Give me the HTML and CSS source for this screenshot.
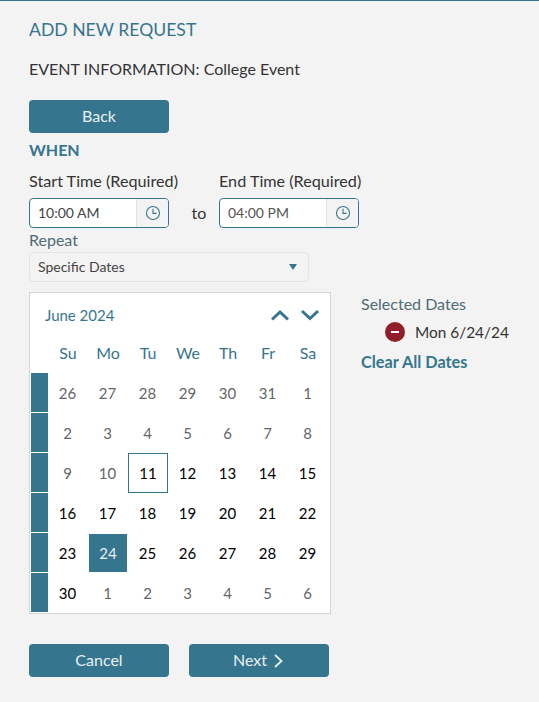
FILE: index.html
```html
<!DOCTYPE html>
<html lang="en">
<head>
    <meta charset="UTF-8">
    <meta name="viewport" content="width=device-width, initial-scale=1.0">
    <title>Add New Request</title>
    <link rel="stylesheet" href="styles.css">
</head>
<body>
    <div class="page">
        <h1 class="page-title">ADD NEW REQUEST</h1>
        <p class="event-info">EVENT INFORMATION: College Event</p>

        <button class="btn back-btn">Back</button>
        <h2 class="section-title">WHEN</h2>

        <div class="time-row">
            <div class="time-field">
                <label class="time-label">Start Time (Required)</label>
                <div class="time-input">
                    <span class="time-value start-value">10:00 AM</span>
                    <span class="time-icon">
                        <svg width="16" height="16" viewBox="0 0 16 16" fill="none" stroke="#36758e" stroke-width="1.1"><circle cx="8" cy="8" r="6.5"/><path d="M8 3.8V8.4H11.6"/></svg>
                    </span>
                </div>
            </div>
            <span class="time-to">to</span>
            <div class="time-field">
                <label class="time-label">End Time (Required)</label>
                <div class="time-input">
                    <span class="time-value">04:00 PM</span>
                    <span class="time-icon">
                        <svg width="16" height="16" viewBox="0 0 16 16" fill="none" stroke="#36758e" stroke-width="1.1"><circle cx="8" cy="8" r="6.5"/><path d="M8 3.8V8.4H11.6"/></svg>
                    </span>
                </div>
            </div>
        </div>

        <label class="repeat-label">Repeat</label>
        <div class="repeat-select">
            <span class="repeat-value">Specific Dates</span>
            <span class="select-arrow"></span>
        </div>

        <div class="date-row">
            <div class="calendar">
                <div class="cal-header">
                    <span class="cal-month">June 2024</span>
                    <span class="cal-nav">
                        <svg width="20" height="12" viewBox="0 0 20 12" fill="none" stroke="#36758e" stroke-width="3"><path d="M2 10.5L10 3L18 10.5"/></svg>
                        <svg width="20" height="12" viewBox="0 0 20 12" fill="none" stroke="#36758e" stroke-width="3"><path d="M2 2L10 9.5L18 2"/></svg>
                    </span>
                </div>
                <div class="cal-grid">
                    <span></span>
                    <span class="dow">Su</span><span class="dow">Mo</span><span class="dow">Tu</span><span class="dow">We</span><span class="dow">Th</span><span class="dow">Fr</span><span class="dow">Sa</span>

                    <span class="week"></span>
                    <span class="day other">26</span><span class="day other">27</span><span class="day other">28</span><span class="day other">29</span><span class="day other">30</span><span class="day other">31</span><span class="day other">1</span>

                    <span class="week"></span>
                    <span class="day other">2</span><span class="day other">3</span><span class="day other">4</span><span class="day other">5</span><span class="day other">6</span><span class="day other">7</span><span class="day other">8</span>

                    <span class="week"></span>
                    <span class="day other">9</span><span class="day other">10</span><span class="day today">11</span><span class="day">12</span><span class="day">13</span><span class="day">14</span><span class="day">15</span>

                    <span class="week"></span>
                    <span class="day">16</span><span class="day">17</span><span class="day">18</span><span class="day">19</span><span class="day">20</span><span class="day">21</span><span class="day">22</span>

                    <span class="week"></span>
                    <span class="day">23</span><span class="day selected">24</span><span class="day">25</span><span class="day">26</span><span class="day">27</span><span class="day">28</span><span class="day">29</span>

                    <span class="week"></span>
                    <span class="day">30</span><span class="day other">1</span><span class="day other">2</span><span class="day other">3</span><span class="day other">4</span><span class="day other">5</span><span class="day other">6</span>
                </div>
            </div>

            <div class="selected-dates">
                <div class="selected-title">Selected Dates</div>
                <div class="selected-item">
                    <span class="remove-icon"></span>
                    <span>Mon 6/24/24</span>
                </div>
                <a class="clear-link">Clear All Dates</a>
            </div>
        </div>

        <div class="footer-btns">
            <button class="btn">Cancel</button>
            <button class="btn next-btn">Next<svg class="next-icon" width="9" height="14" viewBox="0 0 9 14" fill="none" stroke="#e9f0f3" stroke-width="1.8"><path d="M1 1L7.5 7L1 13"/></svg></button>
        </div>
    </div>
</body>
</html>
```

FILE: styles.css
```css
body { font-family: Lato, "Open Sans", sans-serif; margin: 0; background-color: #f3f3f3; color: #333; font-size: 16px; }
.page { border-top: 1px solid #36758e; padding: 0 29px; height: 701px; overflow: hidden; }

.page-title { margin: 18px 0 0; font-size: 17.6px; line-height: 22px; font-weight: 400; color: #36758e; }
.event-info { margin: 18px 0 0; font-size: 16px; line-height: 20px; color: #333; }

.btn { width: 140px; height: 33px; border: none; border-radius: 4px; background-color: #36758e; color: #e9f0f3; font-family: inherit; font-size: 16px; padding: 0 0 2px; cursor: pointer; }
.back-btn { display: block; margin-top: 21px; }
.section-title { margin: 7px 0 0; font-size: 16px; line-height: 20px; font-weight: 700; color: #36758e; }

/* start and end time */
.time-row { display: flex; align-items: flex-end; margin-top: 11px; }
.time-label { display: block; font-size: 16.2px; line-height: 20px; margin-bottom: 7px; white-space: nowrap; }
.time-field { width: 140px; }
.time-input { display: flex; height: 30px; box-sizing: border-box; border: 1px solid #36758e; border-radius: 4px; background-color: #fff; overflow: hidden; }
.time-value { flex: 1; padding-left: 8px; font-size: 14px; line-height: 28px; color: #555; }
.start-value { color: #444; }
.time-icon { width: 31px; display: flex; align-items: center; justify-content: center; background-color: #f3f3f3; border-left: 1px solid #e2e2e2; }
.time-to { box-sizing: border-box; width: 50px; padding-left: 10px; text-align: center; font-size: 16px; line-height: 30px; }

.repeat-label { display: block; margin-top: 2px; font-size: 16px; line-height: 20px; color: #4f6b75; }
.repeat-select { display: flex; justify-content: space-between; align-items: center; box-sizing: border-box; width: 280px; height: 30px; margin-top: 2px; padding: 0 11px 0 8px; border: 1px solid #e4e4e4; border-radius: 4px; font-size: 14px; color: #444; }
.repeat-value { margin-bottom: 2px; }
.select-arrow { width: 0; height: 0; border-left: 4px solid transparent; border-right: 4px solid transparent; border-top: 6px solid #36758e; }

.date-row { display: flex; margin-top: 10px; }

/* calendar */
.calendar { box-sizing: border-box; width: 302px; height: 322px; padding: 1px; border: 1px solid #d5d5d5; background-color: #fff; }
.cal-header { display: flex; justify-content: space-between; align-items: center; height: 42px; padding: 0 9px 0 14px; }
.cal-month { font-size: 15px; color: #36758e; }
.cal-nav { display: flex; gap: 10px; }
.cal-grid { display: grid; grid-template-columns: 17px repeat(7, 40px); grid-template-rows: 37px repeat(6, 40px); }
.dow { display: flex; align-items: center; justify-content: center; padding-bottom: 4px; font-size: 16px; color: #36758e; }
.week { background-color: #36758e; margin-bottom: 1px; }
.day { display: flex; align-items: center; justify-content: center; box-sizing: border-box; padding-right: 1px; font-size: 15px; color: #000; }
.other { color: #666; }
.today { padding-right: 0; border: 1px solid #36758e; }
.selected { margin: 1px; padding-right: 0; background-color: #36758e; color: #e9f0f3; }

/* selected dates */
.selected-dates { margin-left: 30px; }
.selected-title { margin-top: 2px; font-size: 16px; line-height: 20px; color: #4f6b75; }
.selected-item { display: flex; align-items: center; gap: 10px; margin: 8px 0 0 24px; font-size: 15.4px; line-height: 20px; }
.remove-icon { position: relative; width: 20px; height: 20px; border-radius: 50%; background-color: #8f1d2a; }
.remove-icon::after { content: ""; position: absolute; left: 6px; top: 9px; width: 8px; height: 2px; background-color: #fff; }
.clear-link { display: block; margin-top: 10px; font-size: 16.3px; line-height: 20px; font-weight: 700; color: #36758e; }

.footer-btns { display: flex; gap: 20px; margin-top: 30px; }
.next-btn { padding-right: 2px; }
.next-icon { vertical-align: -2px; margin-left: 7px; }
```
